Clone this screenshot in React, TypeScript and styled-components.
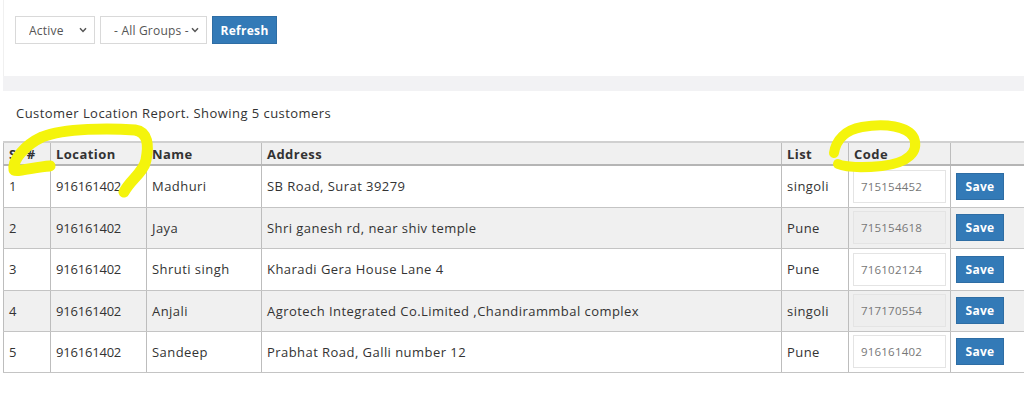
import React from "react";
import styled, { createGlobalStyle } from "styled-components";

const Global = createGlobalStyle`
  html, body { margin: 0; padding: 0; background: #fff; }
  body { font-family: "Open Sans", "Liberation Sans", sans-serif; color: #333; font-size: 13px; letter-spacing: 0.45px; }
  * { box-sizing: border-box; }
`;

const Page = styled.div`
  position: relative;
  width: 1024px;
  height: 403px;
  overflow: hidden;
  padding-left: 3px;
`;

const TopPanel = styled.div`
  height: 76px;
  border-left: 1px solid #f0f0f0;
  display: flex;
  align-items: flex-start;
  gap: 5px;
  padding: 16px 0 0 11px;
`;

const SelectWrap = styled.div<{ $w: number }>`
  position: relative;
  width: ${(p) => p.$w}px;
  height: 28px;
`;

const Select = styled.select`
  appearance: none;
  width: 100%;
  height: 100%;
  border: 1px solid #d9d9d9;
  background: #fff;
  color: #555;
  font-family: inherit;
  font-size: 12px;
  letter-spacing: 0.2px;
  padding: 0 0 0 13px;
  border-radius: 0;
`;

const Chevron = styled.svg`
  position: absolute;
  right: 8px;
  top: 11px;
  pointer-events: none;
`;

const Button = styled.button<{ $w: number; $h: number }>`
  width: ${(p) => p.$w}px;
  height: ${(p) => p.$h}px;
  background: #337ab7;
  border: 1px solid #2e6da4;
  color: #fff;
  font-family: inherit;
  font-weight: 700;
  font-size: 12px;
  letter-spacing: 0.3px;
  padding: 0;
  border-radius: 0;
`;

const Band = styled.div`
  height: 15px;
  background: #f2f2f4;
`;

const ReportPanel = styled.div`
  padding-top: 14px;
`;

const Title = styled.div`
  padding-left: 13px;
  height: 36px;
  line-height: 16px;
  font-size: 13px;
  color: #333;
`;

const Table = styled.table`
  width: 1021px;
  border-collapse: collapse;
  table-layout: fixed;
  border-top: 2px solid #d0d0d0;
`;

const Th = styled.th<{ $w?: number }>`
  width: ${(p) => (p.$w ? `${p.$w}px` : "auto")};
  height: 23px;
  background: #f0f0f0;
  text-align: left;
  font-weight: 700;
  font-size: 13px;
  color: #333;
  padding: 0 5px;
  border-left: 1px solid #bdbdbd;
  border-bottom: 2px solid #b5b5b5;
`;

const Tr = styled.tr<{ $alt: boolean }>`
  background: ${(p) => (p.$alt ? "#f0f0f0" : "#fff")};
`;

const Td = styled.td<{ $h: number }>`
  height: ${(p) => p.$h}px;
  padding: 0 5px;
  font-size: 13px;
  color: #333;
  border-left: 1px solid #bdbdbd;
  border-bottom: 1px solid #c4c4c4;
  white-space: nowrap;
  overflow: hidden;
`;

const NumCell = styled(Td)`
  letter-spacing: -0.2px;
`;

const CodeCell = styled(Td)`
  padding: 0 4px;
`;

const CodeInput = styled.input<{ $alt: boolean }>`
  display: block;
  width: 93px;
  height: 33px;
  border: 1px solid #e4e4e4;
  background: ${(p) => (p.$alt ? "#eeeeee" : "#fff")};
  color: #777;
  font-family: inherit;
  font-size: 11.5px;
  letter-spacing: 0.2px;
  padding: 0 7px;
`;

const Overlay = styled.svg`
  position: absolute;
  left: 0;
  top: 0;
  pointer-events: none;
`;

const rows = [
  { n: 1, loc: "916161402", name: "Madhuri", addr: "SB Road, Surat 39279", list: "singoli", code: "715154452" },
  { n: 2, loc: "916161402", name: "Jaya", addr: "Shri ganesh rd, near shiv temple", list: "Pune", code: "715154618" },
  { n: 3, loc: "916161402", name: "Shruti singh", addr: "Kharadi Gera House Lane 4", list: "Pune", code: "716102124" },
  { n: 4, loc: "916161402", name: "Anjali", addr: "Agrotech Integrated Co.Limited ,Chandirammbal complex", list: "singoli", code: "717170554" },
  { n: 5, loc: "916161402", name: "Sandeep", addr: "Prabhat Road, Galli number 12", list: "Pune", code: "916161402" },
];

const heights = [42, 41, 42, 41, 41];

const Dropdown = ({ w, value }: { w: number; value: string }) => (
  <SelectWrap $w={w}>
    <Select defaultValue={value}>
      <option>{value}</option>
    </Select>
    <Chevron width="8" height="6" viewBox="0 0 8 6">
      <path d="M1 1.2 L4 4.4 L7 1.2" fill="none" stroke="#555" strokeWidth="1.5" />
    </Chevron>
  </SelectWrap>
);

export default function App() {
  return (
    <>
      <Global />
      <Page>
        <TopPanel>
          <Dropdown w={80} value="Active" />
          <Dropdown w={107} value="- All Groups -" />
          <Button $w={65} $h={28}>Refresh</Button>
        </TopPanel>
        <Band />
        <ReportPanel>
          <Title>Customer Location Report. Showing 5 customers</Title>
          <Table>
            <thead>
              <tr>
                <Th $w={47}>Sr #</Th>
                <Th $w={96}>Location</Th>
                <Th $w={115}>Name</Th>
                <Th $w={520}>Address</Th>
                <Th $w={67}>List</Th>
                <Th $w={102}>Code</Th>
                <Th />
              </tr>
            </thead>
            <tbody>
              {rows.map((r, i) => {
                const h = heights[i];
                return (
                  <Tr key={r.n} $alt={i % 2 === 1}>
                    <NumCell $h={h}>{r.n}</NumCell>
                    <NumCell $h={h}>{r.loc}</NumCell>
                    <Td $h={h}>{r.name}</Td>
                    <Td $h={h}>{r.addr}</Td>
                    <Td $h={h}>{r.list}</Td>
                    <CodeCell $h={h}>
                      <CodeInput $alt={i % 2 === 1} defaultValue={r.code} readOnly={i % 2 === 1} />
                    </CodeCell>
                    <Td $h={h}>
                      <Button $w={48} $h={27}>Save</Button>
                    </Td>
                  </Tr>
                );
              })}
            </tbody>
          </Table>
        </ReportPanel>
        <Overlay width="1024" height="403" viewBox="0 0 1024 403">
          <path
            d="M 50 166 C 35 167, 18 172, 14 170 C 12 160, 25 145, 42 137 C 65 128, 110 128, 135 130 C 148 132, 149 145, 146 160 C 144 172, 130 180, 124 192"
            fill="none"
            stroke="#f4f40c"
            strokeWidth="11"
            strokeLinecap="round"
            strokeLinejoin="round"
          />
          <path
            d="M 834 153 C 836 140, 845 130, 862 127 C 885 123, 908 126, 914 138 C 919 152, 908 163, 882 166 C 862 168, 845 167, 838 164"
            fill="none"
            stroke="#f4f40c"
            strokeWidth="10"
            strokeLinecap="round"
            strokeLinejoin="round"
          />
        </Overlay>
      </Page>
    </>
  );
}
